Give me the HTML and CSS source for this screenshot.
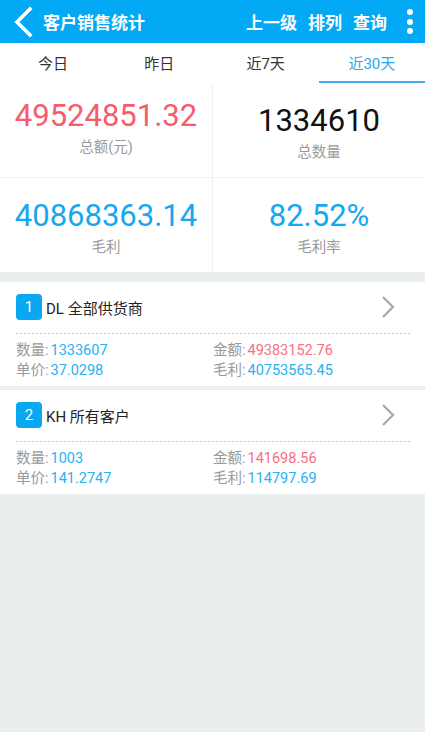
FILE: index.html
```html
<!DOCTYPE html>
<html lang="zh-CN">
<head>
<meta charset="utf-8">
<title>客户销售统计</title>
<link rel="stylesheet" href="styles.css">
</head>
<body>
<header class="appbar">
  <svg class="back" width="22" height="32" viewBox="0 0 22 32" aria-hidden="true">
    <polyline points="17,3 4,16 17,29" fill="none" stroke="#fff" stroke-width="3.6" stroke-linecap="square" stroke-linejoin="miter"/>
  </svg>
  <div class="title">客户销售统计</div>
  <nav class="actions">
    <span>上一级</span>
    <span>排列</span>
    <span>查询</span>
  </nav>
  <div class="more"><i></i><i></i><i></i></div>
</header>

<div class="tabs">
  <div class="tab">今日</div>
  <div class="tab">昨日</div>
  <div class="tab">近7天</div>
  <div class="tab tab--active">近30天</div>
</div>

<section class="stats">
  <div class="stat stat--left stat--raised">
    <div class="stat-num red">49524851.32</div>
    <div class="stat-label">总额(元)</div>
  </div>
  <div class="stat">
    <div class="stat-num dark">1334610</div>
    <div class="stat-label">总数量</div>
  </div>
  <div class="stat stat--left stat--last">
    <div class="stat-num blue">40868363.14</div>
    <div class="stat-label">毛利</div>
  </div>
  <div class="stat stat--last">
    <div class="stat-num blue">82.52%</div>
    <div class="stat-label">毛利率</div>
  </div>
</section>

<main class="list">
  <article class="card">
    <div class="card-head">
      <span class="badge">1</span>
      <span class="card-title">DL 全部供货商</span>
      <svg class="chev" width="14" height="24" viewBox="0 0 14 24" aria-hidden="true">
        <polyline points="2,2 12,12 2,22" fill="none" stroke="#a8a8a8" stroke-width="2.2"/>
      </svg>
    </div>
    <div class="dots"></div>
    <div class="info">
      <div><span class="k">数量:</span><span class="v blue">1333607</span></div>
      <div><span class="k">金额:</span><span class="v red">49383152.76</span></div>
      <div><span class="k">单价:</span><span class="v blue">37.0298</span></div>
      <div><span class="k">毛利:</span><span class="v blue">40753565.45</span></div>
    </div>
  </article>

  <article class="card">
    <div class="card-head">
      <span class="badge">2</span>
      <span class="card-title">KH 所有客户</span>
      <svg class="chev" width="14" height="24" viewBox="0 0 14 24" aria-hidden="true">
        <polyline points="2,2 12,12 2,22" fill="none" stroke="#a8a8a8" stroke-width="2.2"/>
      </svg>
    </div>
    <div class="dots"></div>
    <div class="info">
      <div><span class="k">数量:</span><span class="v blue">1003</span></div>
      <div><span class="k">金额:</span><span class="v red">141698.56</span></div>
      <div><span class="k">单价:</span><span class="v blue">141.2747</span></div>
      <div><span class="k">毛利:</span><span class="v blue">114797.69</span></div>
    </div>
  </article>
</main>
</body>
</html>
```

FILE: styles.css
```css
* { box-sizing: border-box; }

html, body {
  margin: 0;
  padding: 0;
}

body {
  width: 425px;
  min-height: 732px;
  background: #eaeeee;
  font-family: Roboto, "Noto Sans CJK SC", sans-serif;
  color: #222;
}

/* App bar */
.appbar {
  height: 43px;
  background: #03a9f4;
  color: #fff;
  display: flex;
  align-items: center;
}

.back {
  margin-left: 13px;
  flex: none;
}

.title {
  margin-left: 8px;
  font-size: 17px;
  font-weight: 700;
}

.actions {
  margin-left: auto;
  display: flex;
  gap: 11px;
  font-size: 17px;
  font-weight: 700;
}

.more {
  margin-left: 20px;
  margin-right: 12px;
  display: flex;
  flex-direction: column;
  gap: 3.5px;
}

.more i {
  display: block;
  width: 6px;
  height: 6px;
  border-radius: 50%;
  background: #fff;
}

/* Tabs */
.tabs {
  display: grid;
  grid-template-columns: repeat(4, 1fr);
  background: #fff;
  height: 40px;
}

.tab {
  text-align: center;
  font-size: 15px;
  color: #333;
  padding-top: 4px;
  line-height: 34px;
  border-bottom: 2px solid transparent;
}

.tab--active {
  color: #2aa9e6;
  border-bottom-color: #3fb1e8;
}

/* Stats */
.stats {
  display: grid;
  grid-template-columns: 213px 212px;
  background: #fff;
}

.stat {
  height: 95px;
  padding-top: 22px;
  border-bottom: 1px solid #eef1f1;
  display: flex;
  flex-direction: column;
  align-items: center;
}

.stat--left {
  border-right: 1px solid #eef1f1;
}

.stat--raised {
  padding-top: 17px;
}

.stat--last {
  height: 94px;
  border-bottom: 0;
}

.stat-num {
  font-size: 31px;
  line-height: 32px;
  font-weight: 400;
}

.stat-label {
  margin-top: 6px;
  font-size: 14.5px;
  line-height: 20px;
  color: #9a9a9a;
}

.red { color: #f75c6b; }
.dark { color: #111; }
.blue { color: #15a7ef; }

/* List */
.list {
  padding-top: 10px;
}

.card {
  background: #fff;
  padding: 12px 15px 5px 16px;
  margin-bottom: 4px;
}

.card-head {
  height: 26px;
  display: flex;
  align-items: center;
}

.badge {
  width: 26px;
  height: 26px;
  border-radius: 4px;
  background: #0aa8f0;
  color: #fff;
  font-size: 15px;
  line-height: 26px;
  text-align: center;
}

.card-title {
  margin-left: 4px;
  font-size: 15px;
  color: #222;
}

.chev {
  margin-left: auto;
  margin-right: 15px;
}

.dots {
  height: 1px;
  margin-top: 13px;
  background: repeating-linear-gradient(to right, #c8c8c8 0 2px, transparent 2px 4px);
}

.info {
  margin-top: 7px;
  display: grid;
  grid-template-columns: 197px 1fr;
  font-size: 14.5px;
  line-height: 20px;
}

.info .k {
  color: #9a9a9a;
  margin-right: 2px;
}

.info .v.blue { color: #2ab1f2; }
.info .v.red { color: #f7707f; }
```
